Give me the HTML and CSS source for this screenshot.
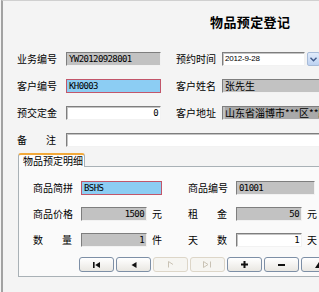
FILE: index.html
```html
<!DOCTYPE html>
<html lang="zh-CN">
<head>
<meta charset="utf-8">
<title>物品预定登记</title>
<link rel="stylesheet" href="styles.css">
</head>
<body>
<div class="win">
  <h1 class="title">物品预定登记</h1>

  <div class="form">
    <span class="lbl">业务编号</span>
    <div class="fld gray mono">YW20120928001</div>
    <span class="lbl l2">预约时间</span>
    <div class="date">
      <div class="fld white dt">2012-9-28</div>
      <div class="dd"><svg width="7" height="5" viewBox="0 0 7 5"><path d="M0.5 0.8 L3.5 3.8 L6.5 0.8" fill="none" stroke="#3f5a8a" stroke-width="1.4"/></svg></div>
    </div>

    <span class="lbl">客户编号</span>
    <div class="fld blue mono">KH0003</div>
    <span class="lbl l2">客户姓名</span>
    <div class="fld gray wide">张先生</div>

    <span class="lbl">预交定金</span>
    <div class="fld white mono num">0</div>
    <span class="lbl l2">客户地址</span>
    <div class="fld gray wide"><span class="sel">山东省淄博市***区**路</span></div>

    <span class="lbl just"><span>备</span><span>注</span></span>
    <div class="fld white span3"></div>
  </div>

  <div class="tabs">
    <div class="tab">物品预定明细</div>
    <div class="panel">
      <div class="pgrid">
        <span class="lbl">商品简拼</span>
        <div class="cell"><div class="fld blue mono w81">BSHS</div></div>
        <span class="lbl l3">商品编号</span>
        <div class="cell"><div class="fld gray mono w79">01001</div></div>

        <span class="lbl">商品价格</span>
        <div class="cell"><div class="fld gray mono num w66">1500</div><span class="unit">元</span></div>
        <span class="lbl l3 just"><span>租</span><span>金</span></span>
        <div class="cell"><div class="fld gray mono num w66">50</div><span class="unit">元</span></div>

        <span class="lbl just"><span>数</span><span>量</span></span>
        <div class="cell"><div class="fld gray mono num w66">1</div><span class="unit">件</span></div>
        <span class="lbl l3 just"><span>天</span><span>数</span></span>
        <div class="cell"><div class="fld white mono num w66">1</div><span class="unit">天</span></div>
      </div>

      <div class="btns">
        <div class="btn"><svg width="8" height="6" viewBox="0 0 8 6"><rect x="0" y="0" width="1.6" height="6" fill="#111"/><path d="M7 0 L7 6 L2.2 3 Z" fill="#111"/></svg></div>
        <div class="btn"><svg width="6" height="6" viewBox="0 0 6 6"><path d="M5.5 0 L5.5 6 L0.5 3 Z" fill="#111"/></svg></div>
        <div class="btn off"><svg width="6" height="7" viewBox="0 0 6 7"><path d="M0.5 0.5 L0.5 6.5 M0.5 0.5 L5 3.5" fill="none" stroke="#c9c2b4" stroke-width="1"/></svg></div>
        <div class="btn off"><svg width="9" height="7" viewBox="0 0 9 7"><path d="M0.5 0.5 L0.5 6.5 M0.5 0.5 L5 3.5 L0.5 6.5 M7.5 0.5 L7.5 6.5" fill="none" stroke="#c9c2b4" stroke-width="1"/></svg></div>
        <div class="btn"><svg width="7" height="7" viewBox="0 0 7 7"><path d="M3.5 0 V7 M0 3.5 H7" stroke="#111" stroke-width="2"/></svg></div>
        <div class="btn"><svg width="7" height="2" viewBox="0 0 7 2"><rect x="0" y="0" width="7" height="2" fill="#111"/></svg></div>
        <div class="btn"><svg width="8" height="6" viewBox="0 0 8 6"><path d="M0 6 L4 0 L8 6 Z" fill="#111"/></svg></div>
      </div>
    </div>
  </div>
</div>
</body>
</html>
```

FILE: styles.css
```css
* { box-sizing: border-box; margin: 0; padding: 0; }

html, body {
  width: 319px;
  height: 292px;
  overflow: hidden;
  background: #f4f4f4;
}

body {
  font-family: "Noto Sans CJK SC", "Noto Sans", sans-serif;
  font-size: 10px;
  color: #000;
}

.win {
  width: 340px;
  height: 292px;
  margin-left: 1px;
  border-left: 2px solid #a2a2a2;
  border-top: 1px solid #d0d0d0;
}

.title {
  font-size: 13px;
  font-weight: bold;
  line-height: 16px;
  padding-top: 13px;
  padding-left: 207px;
  letter-spacing: 0.4px;
}

.form {
  margin-top: 22px;
  padding-left: 14px;
  display: grid;
  grid-template-columns: 49px 95px 61px 120px;
  grid-auto-rows: 14px;
  row-gap: 13px;
  align-items: center;
}

.lbl {
  line-height: 14px;
  white-space: nowrap;
}

.l2 { padding-left: 15px; }
.l3 { padding-left: 26px; }

.just {
  display: flex;
  justify-content: space-between;
  width: 39px;
  box-sizing: content-box;
}

.fld {
  height: 14px;
  line-height: 12px;
  padding: 0 2px;
  border: 1px solid;
  border-color: #7e7e7e #f2f2f2 #f2f2f2 #7e7e7e;
  white-space: nowrap;
  overflow: hidden;
}

.mono {
  font-family: "DejaVu Sans Mono", monospace;
  font-size: 9px;
  letter-spacing: -0.6px;
}

.num { text-align: right; padding-right: 2px; }

.gray { background: #c2c2c2; }
.white { background: #fff; box-shadow: inset 1px 1px 0 #c4c4c4; }
.blue {
  background: #8ccdf3;
  border-color: #c2566a;
}

.sel { background: #a9a9a9; }

.wide { width: 120px; }
.span3 { grid-column: 2 / -1; }

.date {
  display: flex;
  gap: 2px;
}

.dt {
  width: 83px;
  font-family: "Liberation Sans", sans-serif;
  font-size: 8px;
  letter-spacing: -0.2px;
}

.dd {
  width: 13px;
  height: 14px;
  border: 1px solid #a7bbd8;
  border-radius: 2px;
  background: linear-gradient(#e2ecfb, #bdd2f2);
  display: flex;
  align-items: center;
  justify-content: center;
}

.tabs {
  margin-top: 6px;
  margin-left: 15px;
  display: flex;
  flex-direction: column;
  align-items: flex-start;
}

.tab {
  position: relative;
  z-index: 1;
  width: 67px;
  height: 14px;
  margin-bottom: -1px;
  padding-left: 4px;
  line-height: 12px;
  background: #fcfcfc;
  border: 1px solid #a9b1b6;
  border-top: 2px solid #f2a93b;
  border-bottom: none;
  border-radius: 3px 3px 0 0;
}

.panel {
  width: 330px;
  height: 111px;
  border: 1px solid #a9b1b6;
  background: #fafafa;
  padding: 14px 0 0 14px;
}

.pgrid {
  display: grid;
  grid-template-columns: 48px 81px 74px 100px;
  grid-auto-rows: 14px;
  row-gap: 12px;
  align-items: center;
}

.cell {
  display: flex;
  align-items: center;
}

.w81 { width: 81px; }
.w79 { width: 79px; }
.w66 { width: 66px; }

.unit {
  margin-left: 5px;
  line-height: 14px;
}

.btns {
  margin-top: 10px;
  margin-left: 46px;
  display: flex;
  gap: 2px;
}

.btn {
  flex: none;
  width: 35px;
  height: 15px;
  border: 1px solid #7d8fa6;
  border-radius: 3px;
  background: linear-gradient(#ffffff, #e9e7e2);
  display: flex;
  align-items: center;
  justify-content: center;
}

.btn.off {
  border-color: #ddd6c8;
  background: #f6f5f1;
}
```
